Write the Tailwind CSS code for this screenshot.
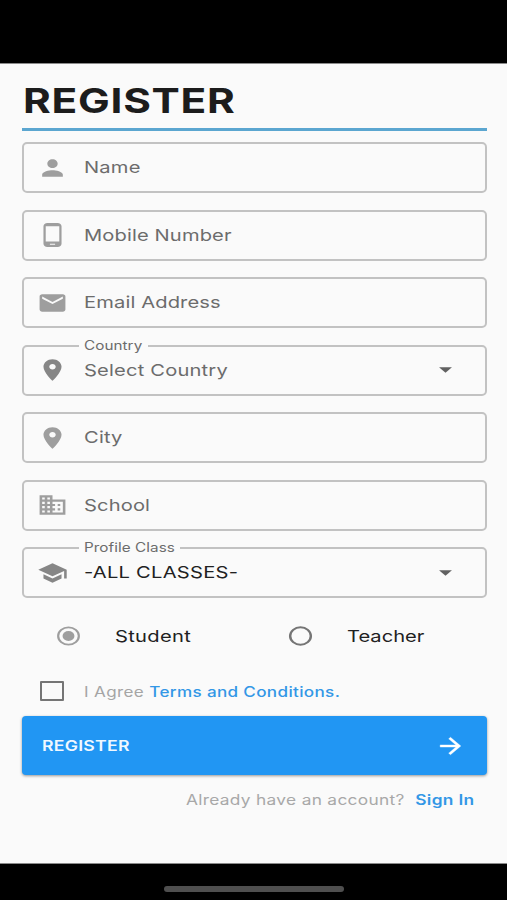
<!DOCTYPE html>
<html lang="en">
<head>
  <meta charset="UTF-8">
  <meta name="viewport" content="width=device-width, initial-scale=1">
  <title>Register</title>
  <script src="https://cdn.jsdelivr.net/npm/@tailwindcss/browser@4"></script>
</head>
<body class="bg-black h-[900px] overflow-hidden flex flex-col font-['Inter',sans-serif]">

  <div class="h-[63px] shrink-0"></div>

  <main class="bg-[#fafafa] h-[801px] shrink-0 pl-[21.500px] border-t border-b border-[#8a8a8a] flex flex-col">
    <header class="h-[67px] shrink-0 w-[465px] border-b-[3px] border-[#5ba6d0] flex items-center pt-[10px]">
      <h1 class="ml-[1.500px] origin-left scale-x-[1.245] text-[34px] leading-none font-bold tracking-[0.6px] text-[#1c1c1c] whitespace-nowrap">REGISTER</h1>
    </header>

    <form class="mt-[11px] w-[465px] flex flex-col">
      <div class="flex flex-col gap-[16.5px]">
        <div class="h-[51px] rounded-[5px] border-2 border-[#c2c2c2] flex items-center pl-[13.500px]">
          <svg class="w-[31px] h-[26px] shrink-0 fill-[#9e9e9e]" viewBox="0 0 24 24" preserveAspectRatio="none"><path d="M12 12c2.21 0 4-1.79 4-4s-1.790-4-4-4-4 1.790-4 4 1.790 4 4 4zm0 2c-2.670 0-8 1.340-8 4v2h16v-2c0-2.660-5.330-4-8-4z"/></svg>
          <span class="ml-[15.500px] origin-left scale-x-[1.22] text-[16.500px] leading-none tracking-[0.15px] text-[#6c6c6c] whitespace-nowrap">Name</span>
        </div>

        <div class="h-[51px] rounded-[5px] border-2 border-[#c2c2c2] flex items-center pl-[13.500px]">
          <svg class="w-[31px] h-[26px] shrink-0 fill-[#9e9e9e]" viewBox="0 0 24 24" preserveAspectRatio="none"><path d="M16 1H8C6.340 1 5 2.340 5 4v16c0 1.660 1.340 3 3 3h8c1.660 0 3-1.340 3-3V4c0-1.660-1.340-3-3-3zm-2 20h-4v-1h4v1zm3.250-3H6.750V4h10.500v14z"/></svg>
          <span class="ml-[15.500px] origin-left scale-x-[1.22] text-[16.500px] leading-none tracking-[0.1px] text-[#6c6c6c] whitespace-nowrap">Mobile Number</span>
        </div>

        <div class="h-[51px] rounded-[5px] border-2 border-[#c2c2c2] flex items-center pl-[13.500px]">
          <svg class="w-[31px] h-[26px] shrink-0 fill-[#9e9e9e]" viewBox="0 0 24 24" preserveAspectRatio="none"><path d="M20 4H4c-1.100 0-1.990.9-1.990 2L2 18c0 1.100.9 2 2 2h16c1.100 0 2-.9 2-2V6c0-1.100-.9-2-2-2zm0 4l-8 5-8-5V6l8 5 8-5v2z"/></svg>
          <span class="ml-[15.500px] origin-left scale-x-[1.22] text-[16.500px] leading-none tracking-[0.1px] text-[#6c6c6c] whitespace-nowrap">Email Address</span>
        </div>

        <div class="relative h-[51px] rounded-[5px] border-2 border-[#c2c2c2] flex items-center pl-[13.500px]">
          <div class="absolute left-[55.500px] -top-[9px] w-[69px] h-[17px] bg-[#fafafa] flex items-center pl-[4.500px]">
            <span class="origin-left scale-x-[1.22] text-[12.500px] leading-none tracking-[0.05px] text-[#6c6c6c] whitespace-nowrap">Country</span>
          </div>
          <svg class="w-[31px] h-[26px] shrink-0 fill-[#868686]" viewBox="0 0 24 24" preserveAspectRatio="none"><path d="M12 2C8.130 2 5 5.130 5 9c0 5.250 7 13 7 13s7-7.750 7-13c0-3.870-3.130-7-7-7zm0 9.500c-1.380 0-2.500-1.120-2.500-2.500s1.120-2.500 2.500-2.500 2.500 1.120 2.500 2.500-1.120 2.500-2.500 2.500z"/></svg>
          <span class="ml-[15.500px] origin-left scale-x-[1.22] text-[16.500px] leading-none tracking-[0.15px] text-[#6c6c6c] whitespace-nowrap">Select Country</span>
          <svg class="ml-auto mr-[24px] w-[31px] h-[26px] shrink-0 fill-[#616161]" viewBox="0 0 24 24" preserveAspectRatio="none"><path d="M7 9.500l5 5 5-5z"/></svg>
        </div>

        <div class="h-[51px] rounded-[5px] border-2 border-[#c2c2c2] flex items-center pl-[13.500px]">
          <svg class="w-[31px] h-[26px] shrink-0 fill-[#9e9e9e]" viewBox="0 0 24 24" preserveAspectRatio="none"><path d="M12 2C8.130 2 5 5.130 5 9c0 5.250 7 13 7 13s7-7.750 7-13c0-3.870-3.130-7-7-7zm0 9.500c-1.380 0-2.500-1.120-2.500-2.500s1.120-2.500 2.500-2.500 2.500 1.120 2.500 2.500-1.120 2.500-2.500 2.500z"/></svg>
          <span class="ml-[15.500px] origin-left scale-x-[1.22] text-[16.500px] leading-none tracking-[0.15px] text-[#6c6c6c] whitespace-nowrap">City</span>
        </div>

        <div class="h-[51px] rounded-[5px] border-2 border-[#c2c2c2] flex items-center pl-[13.500px]">
          <svg class="w-[31px] h-[26px] shrink-0 fill-[#9e9e9e]" viewBox="0 0 24 24" preserveAspectRatio="none"><path d="M12 7V3H2v18h20V7H12zM6 19H4v-2h2v2zm0-4H4v-2h2v2zm0-4H4V9h2v2zm0-4H4V5h2v2zm4 12H8v-2h2v2zm0-4H8v-2h2v2zm0-4H8V9h2v2zm0-4H8V5h2v2zm10 12h-8v-2h2v-2h-2v-2h2v-2h-2V9h8v10zm-2-8h-2v2h2v-2zm0 4h-2v2h2v-2z"/></svg>
          <span class="ml-[15.500px] origin-left scale-x-[1.22] text-[16.500px] leading-none tracking-[0.1px] text-[#6c6c6c] whitespace-nowrap">School</span>
        </div>

        <div class="relative h-[51px] rounded-[5px] border-2 border-[#c2c2c2] flex items-center pl-[13.500px]">
          <div class="absolute left-[55.500px] -top-[9px] w-[101px] h-[17px] bg-[#fafafa] flex items-center pl-[4.500px]">
            <span class="origin-left scale-x-[1.22] text-[12.500px] leading-none tracking-[0.05px] text-[#6c6c6c] whitespace-nowrap">Profile Class</span>
          </div>
          <svg class="w-[31px] h-[26px] shrink-0 fill-[#868686]" viewBox="0 0 24 24" preserveAspectRatio="none"><path d="M5 13.180v4L12 21l7-3.820v-4L12 17l-7-3.820zM12 3L1 9l11 6 9-4.910V17h2V9L12 3z"/></svg>
          <span class="ml-[15.500px] origin-left scale-x-[1.22] text-[16.500px] leading-none tracking-[0.2px] text-[#212121] whitespace-nowrap">-ALL CLASSES-</span>
          <svg class="ml-auto mr-[24px] w-[31px] h-[26px] shrink-0 fill-[#616161]" viewBox="0 0 24 24" preserveAspectRatio="none"><path d="M7 9.500l5 5 5-5z"/></svg>
        </div>
      </div>

      <div class="mt-[18px] h-[40px] flex items-center">
        <div class="w-[233px] pl-[31px] flex items-center">
          <svg class="w-[31px] h-[26px] shrink-0" viewBox="0 0 24 24" preserveAspectRatio="none"><circle cx="12" cy="12" r="8" fill="none" stroke="#9e9e9e" stroke-width="1.700"/><circle cx="12" cy="12" r="4.600" fill="#9e9e9e"/></svg>
          <span class="ml-[31px] origin-left scale-x-[1.22] text-[16.500px] leading-none tracking-[0.25px] text-[#212121] whitespace-nowrap">Student</span>
        </div>
        <div class="w-[232px] pl-[30.500px] flex items-center">
          <svg class="w-[31px] h-[26px] shrink-0" viewBox="0 0 24 24" preserveAspectRatio="none"><circle cx="12" cy="12" r="8" fill="none" stroke="#757575" stroke-width="1.900"/></svg>
          <span class="ml-[31px] origin-left scale-x-[1.22] text-[16.500px] leading-none text-[#212121] whitespace-nowrap">Teacher</span>
        </div>
      </div>

      <div class="mt-[20px] h-[30px] flex items-center">
        <div class="ml-[18.500px] w-[24px] h-[20px] border-2 border-[#757575] rounded-[1px]"></div>
        <p class="ml-[19.500px] pt-px origin-left scale-x-[1.22] text-[14px] leading-none tracking-[0.28px] text-[#a5a5a5] whitespace-nowrap">I Agree <a href="#" class="font-medium text-[#3397e6]">Terms and Conditions.</a></p>
      </div>

      <button type="button" class="mt-[10px] h-[59px] rounded-[4px] bg-[#2196f3] shadow-[0_1px_3px_rgba(0,0,0,0.4)] flex items-center justify-between px-[20.500px]">
        <span class="pt-px origin-left scale-x-[1.22] text-[14.500px] leading-none font-semibold tracking-[0.2px] text-[#f0f8ff] whitespace-nowrap">REGISTER</span>
        <svg class="w-[31px] h-[26px] shrink-0 fill-white stroke-white" stroke-width="0.300" viewBox="0 0 24 24" preserveAspectRatio="none"><path d="M12 4l-1.410 1.410L16.170 11H4v2h12.170l-5.580 5.590L12 20l8-8z"/></svg>
      </button>

      <div class="mt-[15px] h-[20px] pr-[12px] flex items-center justify-end">
        <p class="pt-px origin-right scale-x-[1.22] text-[14.200px] leading-none tracking-[0.25px] text-[#a8a8a8] whitespace-nowrap">Already have an account? <a href="#" class="ml-[4.500px] font-semibold text-[#3397e6]">Sign In</a></p>
      </div>
    </form>
  </main>

  <footer class="flex-1 flex justify-center pt-[22px]">
    <div class="w-[180px] h-[6px] rounded-full bg-[#4f4f4f]"></div>
  </footer>

</body>
</html>
